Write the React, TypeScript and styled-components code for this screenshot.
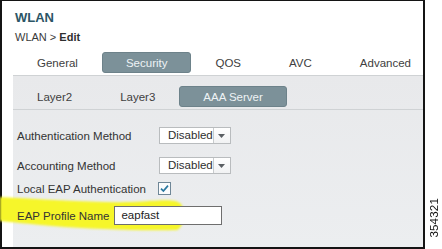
import styled, { createGlobalStyle } from 'styled-components';

const GlobalStyle = createGlobalStyle`
  html, body {
    margin: 0;
    padding: 0;
    background: #ffffff;
  }
  body {
    font-family: 'Liberation Sans', Arial, sans-serif;
  }
`;

const S = {
  Page: styled.div`
    display: flex;
    width: 442px;
    height: 249px;
    position: relative;
    overflow: hidden;
    background: #ffffff;
  `,

  Frame: styled.div`
    display: flex;
    flex-direction: column;
    width: 425px;
    height: 249px;
    box-sizing: border-box;
    border: 2px solid #141414;
    border-top-width: 1px;
    background: #ffffff;
  `,

  Header: styled.header`
    padding: 9px 0 0 13px;
  `,

  Title: styled.h1`
    margin: 0;
    font-size: 13px;
    line-height: 15px;
    font-weight: 700;
    color: #2b5566;
  `,

  Breadcrumb: styled.div`
    margin-top: 6px;
    font-size: 11px;
    line-height: 13px;
    color: #3a3a3a;

    b {
      font-weight: 700;
      color: #2f2f2f;
    }
  `,

  Content: styled.div`
    display: flex;
    flex-direction: column;
    flex: 1;
    margin: 8px 0 0 11px;
  `,

  TabRow: styled.nav`
    display: flex;
    height: 21px;
    padding-bottom: 2px;
  `,

  Tab: styled.div<{ $active?: boolean }>`
    padding: 0 23px;
    height: 21px;
    line-height: 20px;
    font-size: 11.5px;
    white-space: nowrap;
    box-sizing: border-box;
    border-radius: 3px;
    color: ${({ $active }) => ($active ? '#eef3f5' : '#404040')};
    background: ${({ $active }) => ($active ? '#7c9199' : 'transparent')};
    border: 1px solid ${({ $active }) => ($active ? '#6d828a' : 'transparent')};
  `,

  Panel: styled.section`
    position: relative;
    display: flex;
    flex-direction: column;
    flex: 1;
    background: linear-gradient(#e8e9eb, #eceef0);
    border-top: 1px solid #cfd2d4;
  `,

  SubTabRow: styled.nav`
    display: flex;
    padding: 10px 0 2px;
    border-bottom: 1px solid #cfd2d4;
  `,

  Form: styled.div`
    position: relative;
    display: flex;
    flex-direction: column;
    padding: 17px 0 0 4px;
  `,

  Row: styled.div<{ $gap: number; $height: number }>`
    position: relative;
    z-index: 1;
    display: flex;
    align-items: center;
    height: ${({ $height }) => $height}px;
    margin-top: ${({ $gap }) => $gap}px;
  `,

  Label: styled.span<{ $width?: number }>`
    flex: 0 0 ${({ $width }) => ($width ? `${$width}px` : 'auto')};
    font-size: 11.5px;
    color: #333333;
    white-space: nowrap;
  `,

  Select: styled.div`
    display: flex;
    width: 72px;
    height: 17px;
    box-sizing: border-box;
    border: 1px solid #b9bcbe;
    background: #ffffff;
    font-size: 11.5px;
    color: #2e2e2e;
  `,

  SelectValue: styled.span`
    flex: 1;
    padding-left: 8px;
    line-height: 15px;
  `,

  SelectArrow: styled.span`
    display: flex;
    align-items: center;
    justify-content: center;
    width: 17px;
    border-left: 1px solid #c8cbcd;
    background: linear-gradient(#ffffff, #f1f2f3);
  `,

  Check: styled.span`
    display: flex;
    margin-left: 12px;
  `,

  Input: styled.div`
    width: 108px;
    height: 19px;
    margin-left: 5px;
    box-sizing: border-box;
    border: 1px solid #6e6e6e;
    background: #ffffff;
    padding-left: 6px;
    font-size: 11.5px;
    line-height: 17px;
    color: #222222;
  `,

  Highlight: styled.svg`
    position: absolute;
    left: 0;
    top: 194px;
    z-index: 0;
    pointer-events: none;
  `,

  Side: styled.aside`
    flex: 1;
    display: flex;
    align-items: flex-end;
    justify-content: center;
    padding-bottom: 11px;
  `,

  Figure: styled.span`
    writing-mode: vertical-rl;
    transform: rotate(180deg);
    font-size: 11.5px;
    color: #111111;
    letter-spacing: 0.2px;
  `,
};

const tabs = ['General', 'Security', 'QOS', 'AVC', 'Advanced'];
const subTabs = ['Layer2', 'Layer3', 'AAA Server'];

const Arrow = () => (
  <svg width='7' height='4' viewBox='0 0 7 4'>
    <path d='M0 0 H7 L3.5 4 Z' fill='#5a5f63' />
  </svg>
);

const CheckBox = () => (
  <svg width='13' height='13' viewBox='0 0 13 13'>
    <rect x='0.5' y='0.5' width='12' height='12' fill='#fbfcfd' stroke='#6f8797' />
    <path d='M3 6.6 L5.4 9 L10 3.6' fill='none' stroke='#2a78a0' strokeWidth='1.7' />
  </svg>
);

const App = () => {
  return (
    <S.Page>
      <GlobalStyle />
      <S.Frame>
        <S.Header>
          <S.Title>WLAN</S.Title>
          <S.Breadcrumb>
            WLAN &gt; <b>Edit</b>
          </S.Breadcrumb>
        </S.Header>
        <S.Content>
          <S.TabRow>
            {tabs.map((tab) => (
              <S.Tab key={tab} $active={tab === 'Security'}>
                {tab}
              </S.Tab>
            ))}
          </S.TabRow>
          <S.Panel>
            <S.SubTabRow>
              {subTabs.map((tab) => (
                <S.Tab key={tab} $active={tab === 'AAA Server'}>
                  {tab}
                </S.Tab>
              ))}
            </S.SubTabRow>
            <S.Form>
              <S.Row $gap={0} $height={17}>
                <S.Label $width={142}>Authentication Method</S.Label>
                <S.Select>
                  <S.SelectValue>Disabled</S.SelectValue>
                  <S.SelectArrow>
                    <Arrow />
                  </S.SelectArrow>
                </S.Select>
              </S.Row>
              <S.Row $gap={13} $height={17}>
                <S.Label $width={142}>Accounting Method</S.Label>
                <S.Select>
                  <S.SelectValue>Disabled</S.SelectValue>
                  <S.SelectArrow>
                    <Arrow />
                  </S.SelectArrow>
                </S.Select>
              </S.Row>
              <S.Row $gap={8} $height={13}>
                <S.Label>Local EAP Authentication</S.Label>
                <S.Check>
                  <CheckBox />
                </S.Check>
              </S.Row>
              <S.Row $gap={11} $height={19}>
                <S.Label>EAP Profile Name</S.Label>
                <S.Input>eapfast</S.Input>
              </S.Row>
            </S.Form>
          </S.Panel>
        </S.Content>
      </S.Frame>
      <S.Side>
        <S.Figure>354321</S.Figure>
      </S.Side>
      {/* yellow marker stroke drawn over the screenshot, behind the input */}
      <S.Highlight width='190' height='40' viewBox='0 194 190 40'>
        <defs>
          <filter id='soft'>
            <feGaussianBlur stdDeviation='0.8' />
          </filter>
        </defs>
        <path
          d='M0 197 C40 199 95 203 132 202 C158 201 175 198 181 204 C186 211 185 226 177 230 C140 231 92 229 52 226 C28 224 12 222 0 221 Z'
          fill='#f6f62c'
          filter='url(#soft)'
        />
      </S.Highlight>
    </S.Page>
  );
};

export default App;
